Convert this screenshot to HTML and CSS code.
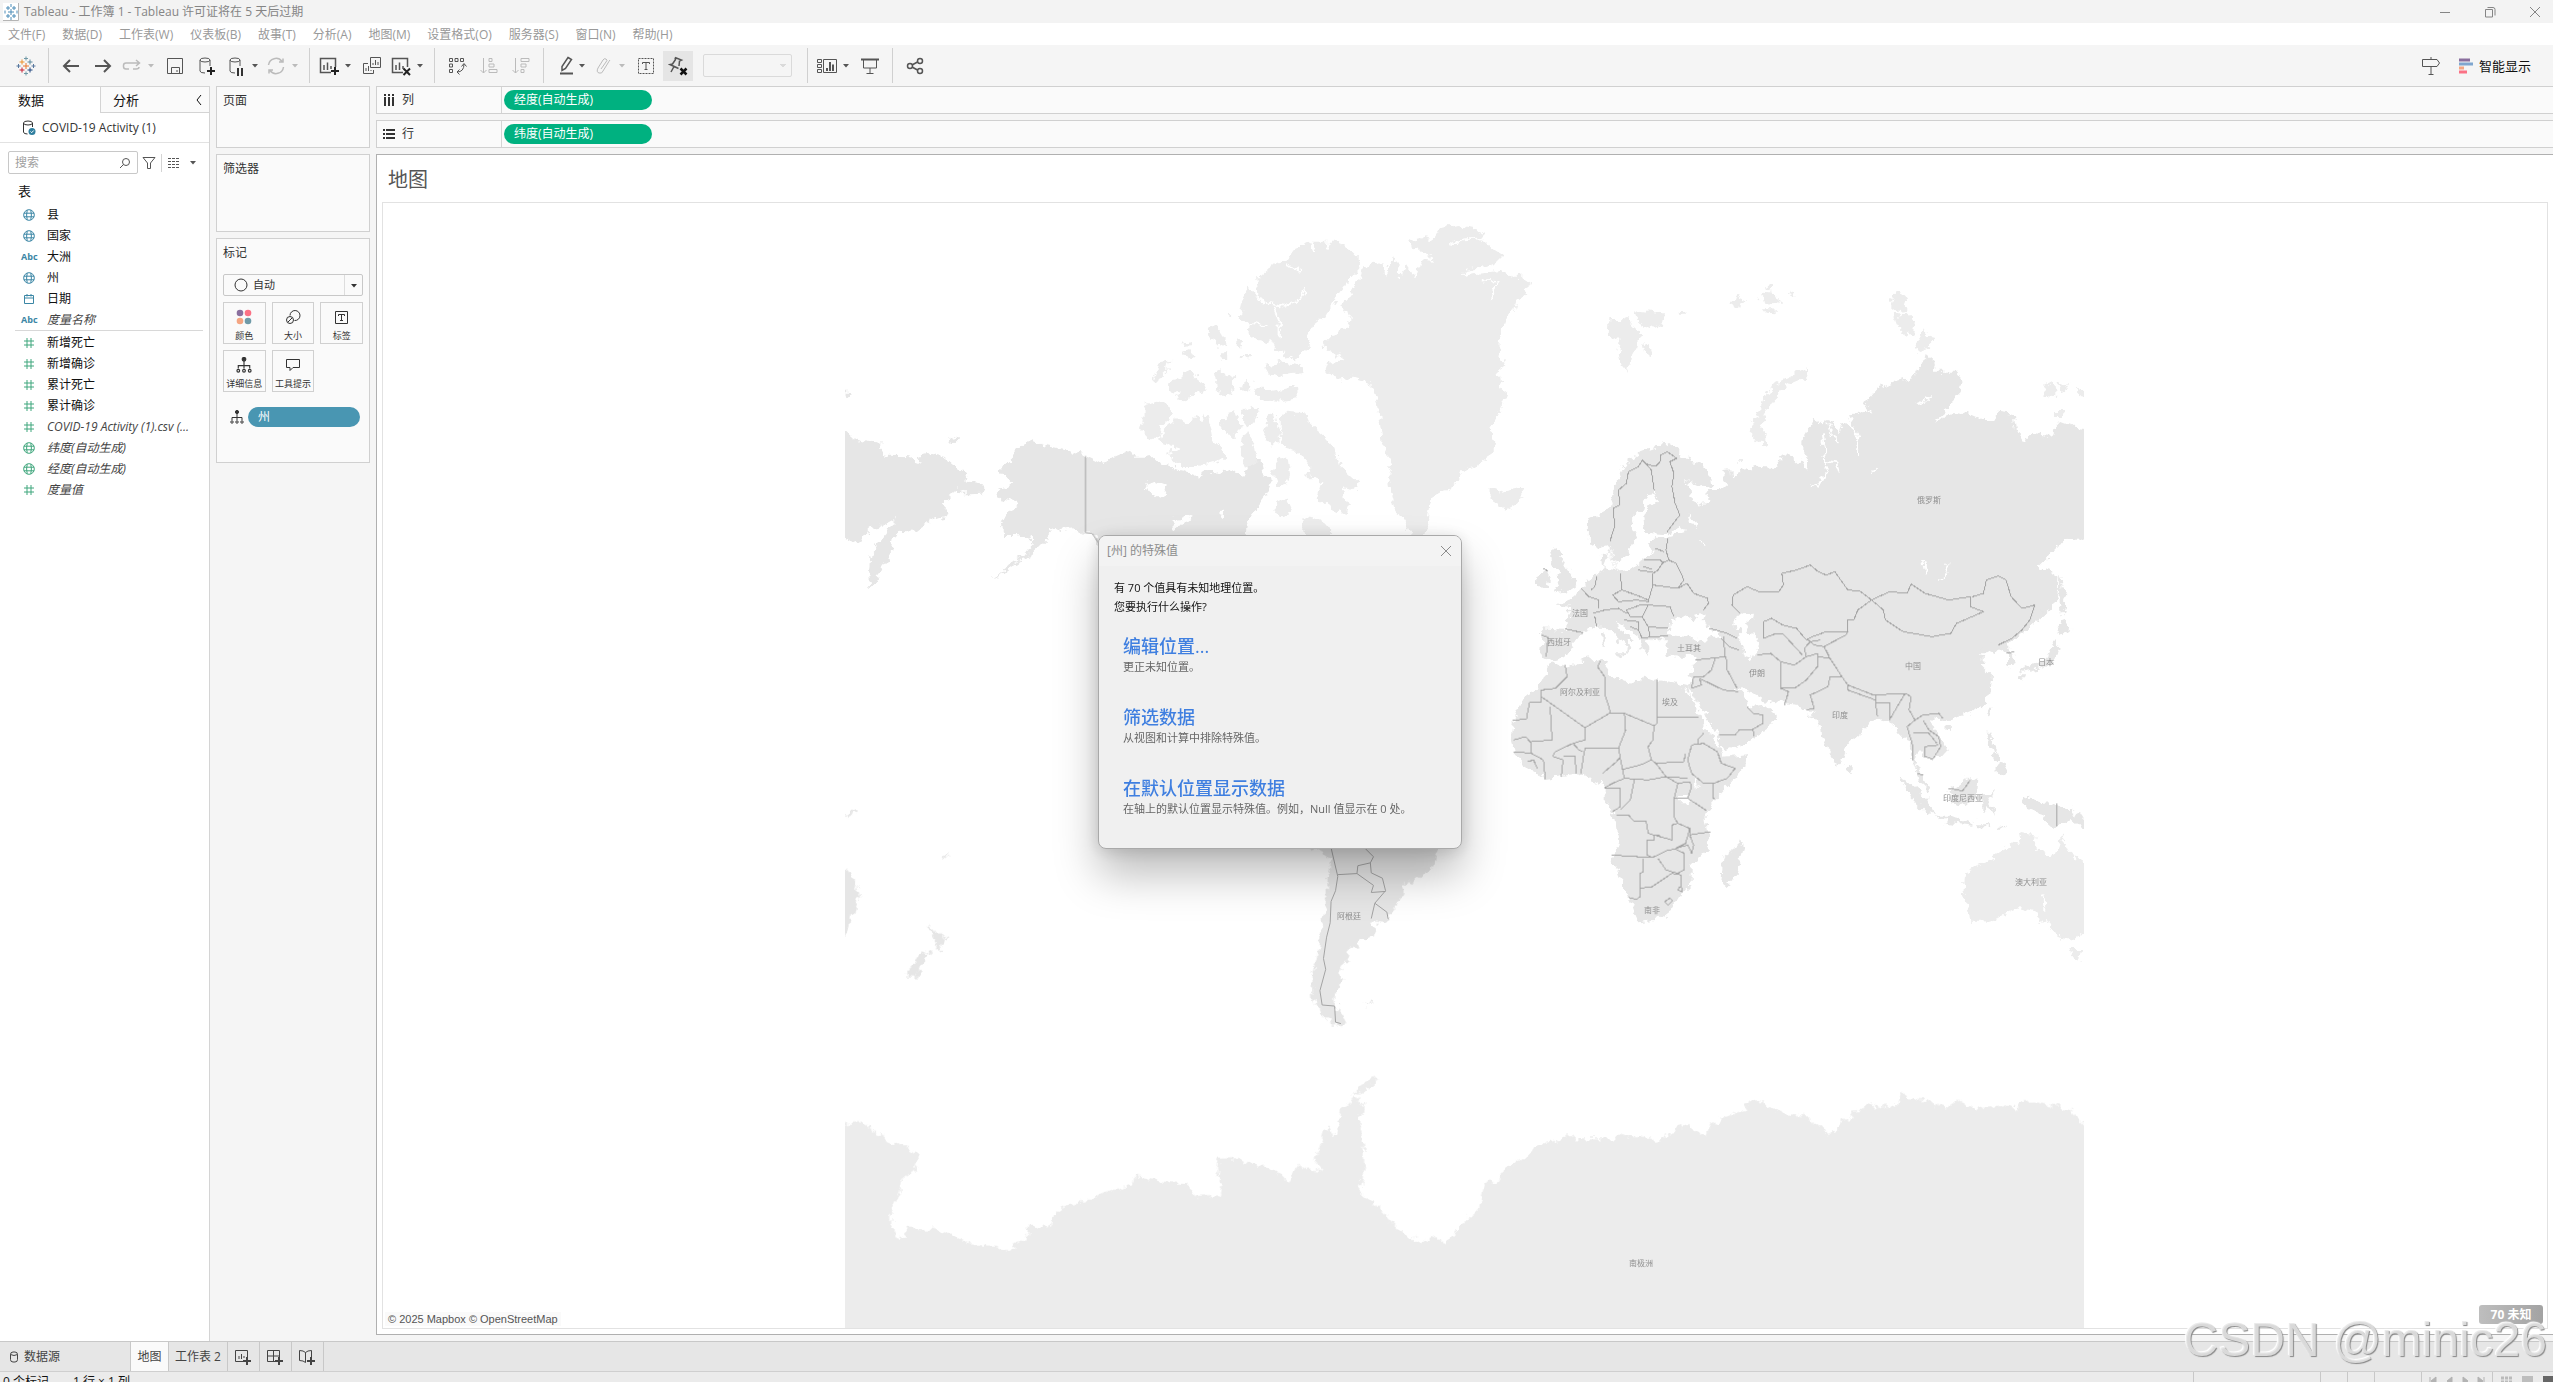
FILE: index.html
```html
<!DOCTYPE html>
<html lang="zh-CN">
<head>
<meta charset="utf-8">
<title>Tableau - 工作簿 1</title>
<link rel="stylesheet" href="styles.css">
</head>
<body>
<svg class="defs" aria-hidden="true">
  <symbol id="i-globe" viewBox="0 0 12 12"><path d="M6 .7a5.3 5.3 0 1 0 0 10.6A5.3 5.3 0 1 0 6 .7M4.2 1.2Q3 6 4.2 10.8M7.8 1.2Q9 6 7.8 10.8M.9 4.2h10.2M.9 7.8h10.2"/></symbol>
  <symbol id="i-hash" viewBox="0 0 12 12"><path d="M4 1v10M8 1v10M1 4h10M1 8h10"/></symbol>
  <symbol id="i-cal" viewBox="0 0 12 12"><path d="M1.500 2.500h9v8h-9zM1.500 5h9M4 1v2.500M8 1v2.500"/></symbol>
  <symbol id="i-tree" viewBox="0 0 14 14"><path d="M7 3v5M2 10V7.500h10V10M7 8v2"/><circle cx="7" cy="2" r="1.600" fill="currentColor"/><circle cx="2" cy="12" r="1.200"/><circle cx="7" cy="12" r="1.200"/><circle cx="12" cy="12" r="1.200"/></symbol>
  <symbol id="i-caret" viewBox="0 0 8 5"><path d="M1 1h6L4 4.500z" fill="currentColor" stroke="none"/></symbol>
  <symbol id="i-close" viewBox="0 0 12 12"><path d="M1 1l10 10M11 1L1 11"/></symbol>
  <symbol id="i-logo" viewBox="0 0 20 20"><path d="M10 7v6M7 10h6" stroke="#e8762d"/><path d="M6 3.500v5M3.500 6h5" stroke="#eb912c"/><path d="M14 3.500v5M11.500 6h5" stroke="#5b879b"/><path d="M6 11.500v5M3.500 14h5" stroke="#c72035"/><path d="M14 11.500v5M11.500 14h5" stroke="#1f447e"/><path d="M10 .5v4M8 2.500h4M10 15.500v4M8 17.500h4" stroke="#7099a6"/><path d="M2.500 8v4M.5 10h4M17.500 8v4M15.500 10h4" stroke="#59789f"/></symbol>
</svg>

<header class="titlebar">
  <svg class="app-icon" viewBox="0 0 16 18"><path d="M0 0h16v18H0z" fill="#fff" stroke="none"/><path d="M15.500 0v17.500H0" stroke="#b5b5b5"/><path d="M8 6v6M5 9h6M5 3v4M3 5h4M11 3v4M9 5h4M5 11v4M3 13h4M11 11v4M9 13h4M8 1v3M8 14v3M2 7.500v3M14 7.500v3" stroke="#4c8db8"/></svg>
  <span class="app-title">Tableau - 工作簿 1 - Tableau 许可证将在 5 天后过期</span>
  <div class="win-controls">
    <button aria-label="最小化"><svg viewBox="0 0 12 12"><path d="M1 6.500h10"/></svg></button>
    <button aria-label="还原"><svg viewBox="0 0 12 12"><path d="M1.500 3.500h7v7.500h-7zM3.500 1.500h5.500q2 0 2 2v6"/></svg></button>
    <button aria-label="关闭"><svg><use href="#i-close"/></svg></button>
  </div>
</header>

<nav class="menubar">
  <button>文件(F)</button><button>数据(D)</button><button>工作表(W)</button><button>仪表板(B)</button><button>故事(T)</button><button>分析(A)</button><button>地图(M)</button><button>设置格式(O)</button><button>服务器(S)</button><button>窗口(N)</button><button>帮助(H)</button>
</nav>

<div class="toolbar">
  <button class="tool" aria-label="起始页"><svg><use href="#i-logo"/></svg></button>
  <i class="sep"></i>
  <button class="tool" aria-label="撤销"><svg viewBox="0 0 20 20"><path d="M18 10H3M9 4l-6 6 6 6" stroke-width="2"/></svg></button>
  <button class="tool" aria-label="重做"><svg viewBox="0 0 20 20"><path d="M2 10h15M11 4l6 6-6 6" stroke-width="2"/></svg></button>
  <div class="split off"><button class="tool" aria-label="重播"><svg viewBox="0 0 20 20"><path d="M7 13H4q-2.500 0-2.500-2.500V9.500Q1.500 7 4 7h13M14 4l3.500 3L14 10M17 11q0 2-3 2h-3" stroke-width="1.500"/></svg></button><button class="caret" aria-label="更多"><svg><use href="#i-caret"/></svg></button></div>
  <button class="tool" aria-label="保存"><svg viewBox="0 0 20 20"><path d="M2.500 2.500h15v15h-15zM6.500 17v-5.500h8V17M12 14v2"/></svg></button>
  <button class="tool" aria-label="新建数据源"><svg viewBox="0 0 20 20"><ellipse cx="8" cy="4" rx="5" ry="2"/><path d="M3 4v11q0 2 5 2M13 4v6"/><path d="M14 11v8M10 15h8" stroke="#222" stroke-width="2"/></svg></button>
  <div class="split"><button class="tool" aria-label="暂停自动更新"><svg viewBox="0 0 20 20"><ellipse cx="9" cy="4" rx="5" ry="2"/><path d="M4 4v11q0 2 5 2M14 4v6"/><path d="M12 12v8M16 12v8" stroke="#333" stroke-width="2"/></svg></button><button class="caret" aria-label="更多"><svg><use href="#i-caret"/></svg></button></div>
  <div class="split off"><button class="tool" aria-label="刷新"><svg viewBox="0 0 20 20"><path d="M2.500 9A7.500 7.500 0 0 1 16 5.500M17 2.500V6h-4M17.500 11A7.500 7.500 0 0 1 4 14.500M3 17.500V14h4" stroke-width="1.500"/></svg></button><button class="caret" aria-label="更多"><svg><use href="#i-caret"/></svg></button></div>
  <i class="sep"></i>
  <div class="split"><button class="tool" aria-label="新建工作表"><svg viewBox="0 0 20 20"><path d="M12 16.500H1.500v-14h15V11M5 9v5M8.500 6.500V14M12 10v3" stroke-width="1.500"/><path d="M16 11v8M12 15h8" stroke="#222" stroke-width="2"/></svg></button><button class="caret" aria-label="更多"><svg><use href="#i-caret"/></svg></button></div>
  <button class="tool" aria-label="复制"><svg viewBox="0 0 20 20"><path d="M8.500 1.500h10v10h-10zM11 9V7M13.500 9V4M16 9V6M6 7.500H1.500v10h10V14M4 15v-3M6.500 15v-5M9 15v-1"/></svg></button>
  <div class="split"><button class="tool" aria-label="清除工作表"><svg viewBox="0 0 20 20"><path d="M12 16.500H1.500v-14h15V11M5 9v5M8.500 6.500V14M12 10v3" stroke-width="1.500"/><path d="M12.500 12.500l6.500 6.500M19 12.500L12.500 19" stroke="#222" stroke-width="2"/></svg></button><button class="caret" aria-label="更多"><svg><use href="#i-caret"/></svg></button></div>
  <i class="sep"></i>
  <button class="tool" aria-label="交换行和列"><svg viewBox="0 0 20 20"><path d="M2.500 2.500h3v3h-3zM8 2.500h3v3H8zM13.500 2.500h3v3h-3zM2.500 8h3v3h-3zM2.500 13.500h3v3h-3zM10 16q7 0 7-8M14.500 10.500L17 7.500l2.500 3M12.500 13.500L10 16l2.500 2.500"/></svg></button>
  <button class="tool off" aria-label="升序排序"><svg viewBox="0 0 20 20"><path d="M4.500 2v15M1.500 14l3 3 3-3M10 2.500h3v3h-3zM10 8h5v3h-5zM10 13.500h8v3h-8z"/></svg></button>
  <button class="tool off" aria-label="降序排序"><svg viewBox="0 0 20 20"><path d="M4.500 2v15M1.500 14l3 3 3-3M10 2.500h8v3h-8zM10 8h5v3h-5zM10 13.500h3v3h-3z"/></svg></button>
  <i class="sep"></i>
  <div class="split"><button class="tool" aria-label="突出显示"><svg viewBox="0 0 20 20"><path d="M15 1.500l3.500 2-6 9-3.500 2v-4z" stroke-width="1.500"/><path d="M7 17.500h13" stroke-width="2"/></svg></button><button class="caret" aria-label="更多"><svg><use href="#i-caret"/></svg></button></div>
  <div class="split off"><button class="tool" aria-label="组成员"><svg viewBox="0 0 20 20"><path d="M8 13l5-7q2-2 0-3t-3 1l-5 8q-2 4 1 5t4-2l5-8q1-2 2-3"/></svg></button><button class="caret" aria-label="更多"><svg><use href="#i-caret"/></svg></button></div>
  <button class="tool" aria-label="显示标记标签"><svg viewBox="0 0 20 20"><path d="M2.500 2.500h15v15h-15z" stroke-dasharray="2 1"/><path d="M6.500 8V6.500h7V8M10 6.500v7M8.500 13.500h3"/></svg></button>
  <button class="tool pressed" aria-label="固定轴"><svg viewBox="0 0 20 20"><path d="M7 1.500l6.500 2.500-2 1-.5 5M7 1.500l.5 2-3 4.500-2.500.5 8.500 4M6 10.500L3 16" stroke-width="1.500"/><path d="M12.500 12.500l6 6M18.500 12.500l-6 6" stroke="#111" stroke-width="2.500"/></svg></button>
  <select class="fit" aria-label="适合" disabled><option></option></select>
  <i class="sep"></i>
  <div class="split"><button class="tool" aria-label="显示/隐藏卡"><svg viewBox="0 0 20 20"><path d="M.5 3.500h4v3h-4zM.5 8.500h4v3h-4zM.5 13.500h4v3h-4zM6.500 3.500h13v13h-13z"/><path d="M10 15v-3M13 15V6M16 15V8.500" stroke-width="2"/></svg></button><button class="caret" aria-label="更多"><svg><use href="#i-caret"/></svg></button></div>
  <button class="tool" aria-label="演示模式"><svg viewBox="0 0 20 20"><path d="M1 3.500h18" stroke-width="2"/><path d="M3.500 4v8h13V4M10 12v5M6.500 17.500h7"/></svg></button>
  <i class="sep"></i>
  <button class="tool" aria-label="共享"><svg viewBox="0 0 20 20" stroke-width="1.500"><circle cx="5" cy="10" r="2.500"/><circle cx="15" cy="5" r="2.500"/><circle cx="15" cy="15" r="2.500"/><path d="M7 9l5.500-3M7 11l5.500 3"/></svg></button>
  <div class="toolbar-end">
    <button class="tool" aria-label="数据指南"><svg viewBox="0 0 20 20"><path d="M10 1v2M1.500 3.500H16l2.500 3.500-2.500 3.500H1.500zM10 10.500v8M7.500 18.500h5"/></svg></button>
    <button class="showme"><svg viewBox="0 0 14 16"><path d="M0 2h11" stroke="#8a6f9e"/><path d="M0 6h14" stroke="#7fa6cf"/><path d="M0 10h5" stroke="#f4a582"/><path d="M0 14h8" stroke="#fb7185"/></svg>智能显示</button>
  </div>
</div>

<div class="workspace">
  <aside class="datapane">
    <div class="pane-tabs">
      <button class="pane-tab active">数据</button>
      <div class="pane-tab-rest"><button class="pane-tab">分析</button><button class="collapse" aria-label="折叠"><svg viewBox="0 0 8 12"><path d="M6 1L2 6l4 5"/></svg></button></div>
    </div>
    <div class="datasource"><svg viewBox="0 0 14 16"><ellipse cx="6" cy="3" rx="4.500" ry="2"/><path d="M1.500 3v9q0 2 4 2M10.500 3v4"/><circle cx="10" cy="11.500" r="3.500" fill="#2f7f9f" stroke="none"/><path d="M8.500 11.500l1.200 1.200 2-2.200" stroke="#fff"/></svg>COVID-19 Activity (1)</div>
    <div class="searchrow">
      <label class="search"><input type="text" placeholder="搜索" aria-label="搜索"><svg viewBox="0 0 12 12"><circle cx="7" cy="5" r="3.500"/><path d="M4.500 7.500L1 11"/></svg></label>
      <button class="mini" aria-label="筛选"><svg viewBox="0 0 14 14"><path d="M1 1.500h12L8.500 7v5.500h-3V7z"/></svg></button>
      <i class="minisep"></i>
      <button class="mini listmode" aria-label="视图"><svg viewBox="0 0 14 14"><path d="M1 2.500h12M1 5.500h12M1 8.500h12M1 11.500h12" stroke-dasharray="3 1"/></svg></button>
      <button class="mini drop" aria-label="更多"><svg><use href="#i-caret"/></svg></button>
    </div>
    <h2 class="tables">表</h2>
    <ul class="fields dim">
      <li><svg><use href="#i-globe"/></svg>县</li>
      <li><svg><use href="#i-globe"/></svg>国家</li>
      <li><b>Abc</b>大洲</li>
      <li><svg><use href="#i-globe"/></svg>州</li>
      <li><svg><use href="#i-cal"/></svg>日期</li>
      <li><b>Abc</b><em>度量名称</em></li>
    </ul>
    <ul class="fields mea">
      <li><svg><use href="#i-hash"/></svg>新增死亡</li>
      <li><svg><use href="#i-hash"/></svg>新增确诊</li>
      <li><svg><use href="#i-hash"/></svg>累计死亡</li>
      <li><svg><use href="#i-hash"/></svg>累计确诊</li>
      <li><svg><use href="#i-hash"/></svg><em>COVID-19 Activity (1).csv (...</em></li>
      <li><svg><use href="#i-globe"/></svg><em>纬度(自动生成)</em></li>
      <li><svg><use href="#i-globe"/></svg><em>经度(自动生成)</em></li>
      <li><svg><use href="#i-hash"/></svg><em>度量值</em></li>
    </ul>
  </aside>

  <div class="cards">
    <section class="card pages"><h3>页面</h3></section>
    <section class="card filters"><h3>筛选器</h3></section>
    <section class="card marks">
      <h3>标记</h3>
      <div class="marktype"><svg class="ring" viewBox="0 0 14 14"><circle cx="7" cy="7" r="6"/></svg><select aria-label="标记类型"><option>自动</option></select><span class="arrow"><svg><use href="#i-caret"/></svg></span></div>
      <div class="markgrid">
        <button><svg viewBox="0 0 16 16"><g stroke="none"><circle cx="4" cy="4" r="3.300" fill="#8a6f9e"/><circle cx="12" cy="4" r="3.300" fill="#fb7185"/><circle cx="4" cy="12" r="3.300" fill="#f4a582"/><circle cx="12" cy="12" r="3.300" fill="#6f9aa8"/></g></svg>颜色</button>
        <button><svg viewBox="0 0 16 16"><path d="M5 6.500A5 5 0 1 1 9.500 11.500"/><circle cx="5" cy="11" r="3.500"/><path d="M3 13l4-4"/></svg>大小</button>
        <button><svg viewBox="0 0 16 16"><path d="M1.500 2.500h12v12h-12zM4.500 7V5.500h6V7M7.500 5.500v6M6 11.500h3"/></svg>标签</button>
        <button><svg><use href="#i-tree"/></svg>详细信息</button>
        <button><svg viewBox="0 0 16 16"><path d="M1.500 2.500h13v8H8l-3 3v-3H1.500z"/></svg>工具提示</button>
      </div>
      <div class="markpill"><svg><use href="#i-tree"/></svg><button class="pill blue">州</button></div>
    </section>
  </div>

  <main class="main">
    <div class="shelf"><div class="shelf-name"><svg viewBox="0 0 12 12"><path d="M2 0v2M6 0v2M10 0v2M2 3v9M6 3v9M10 3v9" stroke-width="2"/></svg>列</div><button class="pill green">经度(自动生成)</button></div>
    <div class="shelf"><div class="shelf-name"><svg viewBox="0 0 12 12"><path d="M0 2h2M0 6h2M0 10h2M3 2h9M3 6h9M3 10h9" stroke-width="2"/></svg>行</div><button class="pill green">纬度(自动生成)</button></div>
    <section class="view">
      <h1>地图</h1>
      <div class="canvas">
        <svg class="map" viewBox="383 203 2164 1125" role="img" aria-label="世界地图">
          <defs>
            <clipPath id="world"><path d="M845 203H2084V1328H845z"/></clipPath>
            <filter id="coast" filterUnits="userSpaceOnUse" x="820" y="200" width="1290" height="1140" color-interpolation-filters="sRGB"><feTurbulence type="fractalNoise" baseFrequency=".13" numOctaves="3" seed="4"/><feDisplacementMap in="SourceGraphic" scale="11" xChannelSelector="R" yChannelSelector="G"/></filter>
          </defs>
          <g clip-path="url(#world)">
          <g filter="url(#coast)">
            <!-- North America, Greenland, Iceland, Chukotka -->
            <g class="land" transform="translate(840 210) scale(.44643 .33333)">
              <path d="M-30 655L11 665 30 688 60 698 88 700 98 715 95 735 110 740 155 742 165 752 178 758 182 735 205 732 235 742 260 770 285 795 290 812 312 815 325 835 318 848 290 850 275 850 262 838 252 850 245 870 225 875 245 905 240 920 210 928 185 950 170 965 130 962 118 985 115 1010 110 1040 90 1075 75 1125 68 1135 65 1080 68 1035 85 1000 110 960 125 925 90 950 65 955 50 990 30 995 11 983-30 983z"/>
              <path d="M245 690L258 682 268 688 262 698 248 699zM8 545h12l4 10-8 10-8-3z"/>
              <path d="M358 770L385 755 385 735 405 710 432 692 455 705 490 715 525 725 550 735 570 748 590 762 610 745 650 722 658 740 685 740 700 735 715 755 750 765 755 785 790 795 805 810 815 785 840 790 860 782 895 790 905 800 915 770 925 745 945 755 950 785 965 810 960 845 940 880 915 925 908 976 1000 1000 580 1000 565 970 550 970 520 955 495 960 470 950 475 970 455 1000 430 1030 400 1055 350 1102 340 1103 385 1060 410 1040 430 1005 430 985 415 978 395 975 360 975 370 955 360 935 370 910 395 895 400 880 380 870 350 862 348 845 370 830 390 820 370 800 360 785z"/>
              <path class="ice" d="M725 660L750 630 775 640 800 615 812 640 820 610 830 650 835 690 860 720 860 745 835 755 800 768 765 768 740 745 735 725 765 715 705 690 725 680zM680 585L710 575 740 590 748 615 720 645 715 680 695 690 672 660 680 630zM850 640L870 605 885 600 895 640 888 680 870 680zM905 600L935 590 940 615 925 640 910 655 900 620zM900 680L915 670 930 720 935 760 905 770 895 740zM955 640L960 610 975 605 980 650 985 700 960 700 948 675zM985 625L1000 605 1045 610 1050 640 1085 680 1110 720 1120 770 1160 820 1155 840 1130 835 1125 870 1140 880 1135 915 1090 885 1070 860 1080 820 1060 800 1055 770 1030 730 1000 720 985 680zM985 740L1005 745 1010 790 1000 820 980 830 970 790zM1040 925L1075 930 1100 950 1100 990 1045 990zM985 870l20 5 10 30-25 15-15-25zM1045 780h12v25h-12z"/>
              <path class="ice" d="M930 530L960 540 1020 530 1025 565 980 575 940 570zM950 470L990 455 1035 470 1030 490 985 495 955 490zM825 360L840 352 855 375 868 400 850 410zM770 395L790 388 792 405 770 408zM765 430L785 420 790 440 775 450zM700 510L715 460 740 455 735 480 715 512zM735 520L765 510 765 485 790 490 810 510 820 540 795 550 770 575 755 565 760 545 735 540zM840 490L855 480 860 500 885 495 885 540 865 560 845 540zM885 380L900 395 903 415 890 415zM905 510L922 520 915 550 900 535zM870 308h6v15h-6zM850 430h15v20h-15zM900 435h18v10h-18z"/>
              <path class="ice" d="M935 205L960 175 1000 150 1020 115 1055 95 1105 95 1140 115 1165 150 1160 180 1140 210 1120 250 1100 290 1080 325 1060 345 1045 380 1060 400 1035 430 1020 455 995 430 975 415 965 390 945 400 915 370 918 340 895 320 905 260 915 230 940 260z"/>
              <path class="ice" d="M1170 210L1165 185 1190 165 1215 160 1220 195 1240 145 1255 200 1270 165 1290 205 1300 150 1325 155 1320 130 1280 120 1275 90 1305 85 1325 90 1340 60 1385 45 1420 55 1440 70 1435 85 1460 115 1485 135 1470 155 1445 170 1400 180 1390 195 1445 185 1480 180 1510 200 1530 200 1548 220 1535 250 1515 275 1510 300 1490 330 1480 370 1475 440 1495 460 1475 480 1480 530 1495 545 1480 590 1470 630 1455 660 1470 710 1455 740 1430 765 1390 785 1380 820 1350 845 1325 865 1320 905 1305 990 1280 980 1265 940 1245 900 1235 850 1228 800 1235 760 1215 700 1210 640 1205 580 1195 540 1175 510 1150 500 1115 510 1095 480 1085 460 1130 450 1110 430 1080 405 1100 380 1135 350 1142 320 1125 285 1145 250 1150 230zM1455 835L1475 845 1525 830 1530 860 1515 880 1490 898 1470 885 1465 870 1455 860z"/>
              <path class="sea" d="M675 830L705 812 730 825 725 850 705 865 695 845zM745 930L765 928 795 912 780 930 765 950 745 960zM850 905l10 0 0 12-10 0z"/>
              <path class="fjord" d="M925 235L950 280 990 290 1030 270 1045 240M970 290L985 340 985 380M1000 165L1030 180M1055 95l5 30M1095 95l-5 30M915 340l40 10M1365 105L1400 88 1440 85M1460 270L1475 210 1440 215"/>
            </g>
            <!-- Northern Eurasia -->
            <g class="land" transform="translate(1490 260) scale(.39541 .33333)">
              <path d="M250 850L250 780 300 750 310 700 325 650 345 610 375 580 420 560 445 548 475 570 500 600 530 610 560 650 562 680 540 685 490 665 510 690 515 730 535 740 555 715 548 690 580 690 600 670 590 630 608 628 610 655 640 630 680 620 720 625 735 600 730 585 770 595 803 630 805 600 790 580 790 540 810 500 820 470 840 490 860 480 885 520 895 490 920 510 908 460 960 455 950 425 975 390 1020 365 1075 345 1090 310 1110 292 1130 310 1125 335 1175 335 1195 365 1190 400 1165 430 1150 460 1125 485 1180 455 1215 465 1245 480 1280 480 1285 458 1325 465 1330 510 1350 552 1365 525 1420 530 1425 505 1440 485 1475 500 1540 508 1540 838 1450 840 1420 880 1385 920 1420 935 1438 950 1435 1010 1410 1060 1370 1100 1340 1130 1290 1160 1260 1180 670 1180 560 1100 400 1140 375 1125 320 1078 290 1100 265 1100 235 1120 195 1110 200 1040 165 1030 215 1015 225 995 255 955 285 930 280 885 300 880 300 855 270 865z"/>
              <path d="M803 325L800 350 750 375 720 420 695 460 688 510 705 555 675 550 655 520 670 480 690 430 715 375 760 350 790 330zM1035 90L1055 120 1050 150 1015 155 1015 120zM1025 165L1050 155 1075 180 1070 225 1040 215 1030 190zM1100 205L1122 240 1100 265 1075 272 1085 235zM302 180L330 180 350 170 360 200 385 225 370 250 350 335 330 310 325 270 330 240 300 230zM365 150L400 155 440 160 435 190 405 205 375 185zM390 245L412 280 400 300zM480 150h14v8h-14zM605 130L630 110 650 125 625 145zM680 110l15-15 25 5 10 25-25 10zM700 75l15 5-5 15zM755 100l17-8 0 20zM730 120l12 5-10 12zM690 145l30 0 0 15-20-2zM1400 375L1425 360 1430 400 1415 415 1400 405zM1435 375L1465 370 1450 405zM1480 385L1540 405 1540 415 1495 405zM1430 450h20v18h-20zM628 600h12v12h-12z" class="ice"/>
              <path d="M150 870L165 855 185 880 180 895 195 925 218 965 210 990 165 1000 175 975 165 955 175 940 155 910zM120 950L140 930 150 955 140 978 118 975z"/>
              <path class="sea" d="M395 700L420 695 425 715 405 740 385 770 390 815 450 820 480 795 495 815 455 830 420 830 400 850 415 885 390 885 385 905 350 930 320 935 305 860 320 910 350 880 370 830 355 800 365 765 385 745zM305 870L318 930 285 925zM500 765l18 15 0 25-12-20zM530 840l12 10 0 15z"/>
              <path class="fjord" d="M842 520L850 600 848 640 830 680 812 672M850 605L875 610 885 645M858 490L865 530 885 545M920 500L930 540 928 585M1160 910L1150 950 1115 980M845 1075L860 1062 895 1058M1080 430L1120 410M1095 900L1102 950M965 645L980 625M500 670L545 690"/>
            </g>
            <!-- Southern Eurasia, Africa, Australia -->
            <g class="land" transform="translate(1490 560) scale(.39541 .33333)">
              <path d="M130 205L195 210 235 220 215 250 195 285 160 300 130 290 135 240z"/>
              <path d="M265 170L290 200 320 230 345 260 340 285 355 260 345 240 365 240 330 210 315 180 345 205 375 230 385 265 400 285 408 265 395 245 420 235 448 235 440 260 445 285 480 290 520 290 515 320 500 380 510 395 530 440 560 490 580 540 585 565 600 572 660 540 700 510 725 465 700 440 690 430 680 445 655 435 645 410 625 385 635 378 660 400 690 420 740 430 780 435 800 450 825 460 800 465 835 480 840 530 860 580 878 620 895 595 905 550 940 515 960 485 985 475 1010 480 1030 530 1050 530 1065 560 1068 600 1080 640 1105 692 1110 680 1095 640 1075 620 1080 590 1085 570 1110 600 1140 590 1155 570 1145 530 1115 500 1120 475 1145 480 1200 465 1240 445 1265 400 1270 350 1245 320 1250 290 1235 280 1265 245 1285 260 1310 280 1310 320 1330 315 1325 280 1310 255 1370 200 1405 150 1405 60 700 60 265 60z"/>
              <path d="M160 305L190 320 240 300 280 295 300 305 295 340 340 365 380 370 385 345 420 360 480 370 500 375 505 400 525 450 545 500 580 560 590 590 650 583 645 620 610 670 560 730 545 770 555 840 550 870 510 915 510 965 485 1000 460 1050 430 1078 375 1087 365 1060 350 1010 330 960 310 900 325 850 320 780 290 720 290 680 250 655 230 640 140 655 90 620 60 580 55 540 60 480 90 410 130 370 150 320zM633 835L642 870 620 960 600 978 585 965 590 890 620 865zM903 605L915 625 910 642 902 635z"/>
              <path d="M1440 190L1450 185 1470 205 1450 225 1432 215zM1440 40L1448 90 1460 110 1445 170 1438 120zM1430 240L1438 260 1425 310 1395 325 1345 335 1340 325 1385 310 1410 290zM1335 340L1355 340 1345 365zM1262 440L1268 440 1262 470 1255 455zM1152 495h16v15h-16zM1255 515L1268 515 1270 550 1285 580 1260 560zM1275 625L1300 605 1305 635 1290 640zM1270 575l15 5 10 20-15 0zM1160 690L1180 680 1215 650 1235 660 1230 710 1200 740 1165 720zM1035 650L1060 665 1110 720 1125 765 1100 755 1065 710zM1125 770L1160 770 1225 785 1225 797 1165 790zM1245 700L1280 700 1262 715 1275 760 1255 745 1245 760zM1235 793h30v6h-30zM1280 805l30-10-20 15zM1345 715L1370 710 1390 735 1430 730 1480 760 1540 790 1540 810 1495 800 1470 780 1430 800 1410 790 1400 760 1360 745zM282 220l8 0 0 40-8 0zM315 280l25 0-5 15z"/>
              <path class="ice" d="M1200 940L1240 915 1265 905 1280 880 1310 860 1320 845 1340 850 1335 820 1385 830 1380 860 1415 890 1435 880 1445 820 1460 860 1485 900 1540 940 1540 1115 1500 1120 1470 1140 1430 1130 1410 1080 1390 1090 1385 1060 1340 1045 1290 1070 1250 1085 1215 1085 1210 1040 1195 990zM1465 1170L1495 1170 1490 1200 1475 1200z"/>
              <path class="sea" d="M450 225L455 190 480 165 500 175 515 185 520 165 545 155 530 180 560 200 580 230 540 240 490 230zM618 180L640 160 668 158 665 180 645 190 655 220 680 235 675 270 665 297 645 290 640 265 625 235 635 215 615 195zM478 705h25v25h-22z"/>
              <path class="fjord" d="M1400 1010L1402 1050M518 660l5 20M490 380l15 30"/>
            </g>
            <!-- South America, New Zealand, western Antarctica -->
            <g class="land" transform="translate(840 780) scale(.44643 .35714)">
              <path d="M-30 230L11 250 40 295 45 330 30 370 15 435-30 435zM198 402L220 435 238 435 225 475 210 480 215 455 205 430zM190 475L205 485 180 525 170 550 150 550 148 540 175 500zM1050 180L1100 220 1095 270 1090 350 1075 420 1068 500 1058 550 1060 610 1080 660 1105 685 1135 680 1112 640 1105 610 1115 580 1130 560 1118 540 1138 500 1140 475 1158 470 1160 450 1190 440 1200 420 1190 395 1220 400 1240 360 1260 325 1270 290 1315 265 1330 230 1340 180zM1170 628l22-5 0 9zM11 95l25-12 2 5-24 15zM230 215l18-12-12 16zM130 245l16 18"/>
              <path class="ice" d="M-30 960L11 958 45 955 70 975 100 1000 120 1020 145 1018 178 1050 170 1090 140 1120 130 1165 115 1200 115 1245 130 1285 148 1278 148 1255 210 1260 265 1278 285 1298 350 1308 375 1320 390 1300 418 1280 422 1248 470 1252 480 1220 500 1190 560 1178 590 1155 655 1135 660 1105 690 1120 780 1130 800 1170 850 1165 855 1130 845 1110 850 1060 900 1058 905 1075 950 1080 1005 1120 1030 1075 1050 1090 1085 1095 1060 1060 1075 1030 1085 975 1105 985 1108 1005 1118 960 1125 920 1155 880 1172 910 1165 960 1172 1020 1175 1080 1165 1155 1200 1190 1235 1235 1260 1270 1300 1292 1320 1280 1362 1295 1375 1265 1430 1200 1445 1125 1470 1130 1490 1085 1545 1050 1568 1020 1600 1010 1600 1680-30 1680zM1150 875L1190 835 1208 835 1165 878z"/>
            </g>
            <!-- Eastern Antarctica -->
            <g class="land" transform="translate(1520 1060) scale(.3699 .33333)">
              <path class="ice" d="M-40 330L0 300 20 297 30 270 55 250 110 242 130 222 150 235 260 235 275 218 290 226 335 230 365 242 410 225 420 208 455 195 485 220 500 230 515 195 575 160 605 150 612 130 635 120 660 125 670 145 700 158 780 170 795 195 820 195 830 225 860 208 868 185 895 170 900 152 920 150 940 130 970 142 1020 137 1032 97 1045 115 1100 118 1150 145 1185 118 1230 148 1310 132 1335 150 1350 127 1395 125 1485 150 1525 190 1580 200 1580 840-40 840z"/>
            </g>
          </g>
          <g class="borders">
            <path transform="translate(840 210) scale(.44643 .33333)" d="M550 738V968L565 970 580 1000"/>
            <path transform="translate(1490 260) scale(.39541 .33333)" d="M303 845L315 800 312 745 328 735 325 690 345 670 350 635 375 620 385 600 400 615 420 618 430 605 432 585 448 575 472 595 455 605 465 640 460 680 468 730 480 765 448 815M385 600L408 630 415 690M450 835L445 870 452 900M418 865L440 875M390 900L430 900 437 908 452 900 470 910 485 945 490 960 475 985 412 975 412 940 425 930 437 908M388 920L410 928M375 930L412 937M330 940L333 990 310 1005 325 1025 370 1020 400 1025 412 975M333 990L370 1005 400 1020M475 985L498 970 515 1000 550 1015 552 1030 540 1050M400 1035L455 1040 465 1070M400 1035L385 1070 400 1100 450 1105M345 1050L380 1035 400 1035M345 1050L355 1070 385 1070M260 1060L290 1050 325 1045 345 1060M230 985L250 1010 275 1020M270 950L265 980 255 990M275 1020V1045M265 1070L270 1100M190 1107L235 1118M340 1080L375 1085 375 1110 355 1100M375 1110L385 1135 410 1130 450 1128M400 1100L405 1130M632 1060L612 1035 615 1005 650 980 680 995 730 995 742 975 738 940 775 930 810 915 830 935 850 945 872 935 905 990 935 993 965 1020 930 1050 920 1080 905 1080 905 1115 850 1115 815 1130 800 1140 775 1105 740 1095 712 1075 692 1085 692 1135M965 1020L1010 995 1055 1000 1065 972 1100 1000 1160 1020 1215 1010 1215 1040 1248 1055 1180 1090 1165 1120 1118 1130 1045 1115 1000 1080 995 1050 965 1020M1220 1010L1248 1000 1255 960 1285 948 1305 960 1318 1010 1345 1045 1378 1035 1365 1080 1345 1110 1320 1135 1285 1155M555 1105L600 1120 625 1135M585 1135L605 1160 630 1170M135 925L148 935"/>
            <path transform="translate(1490 560) scale(.39541 .33333)" d="M130 225L147 232 142 290M190 315L195 350 165 385 130 390 130 428 100 428 92 478 58 480M130 410L240 503 305 458 290 400 290 350 272 320 280 300M305 458L340 460 415 497 423 490 423 360M423 472L528 472M240 503L240 540 210 550M152 440L157 540 105 545M60 540L90 530 105 550 105 580M60 575L105 580 135 600M95 605L110 600 120 625M340 460L343 510 325 565M415 497L412 540 400 560 408 600 380 615 335 628 325 565 240 565 235 600 230 640M210 550L225 570 235 575M210 550L165 575 158 590M160 590L185 600 180 650M185 590L215 590 218 640M135 600L140 660M408 600L420 610 490 605 495 580M500 600L510 555 540 550 575 575M525 550L525 540 540 520M500 600L510 640 540 670M575 575L585 610 620 625 600 655 565 670 540 670M420 610L445 650 500 655M335 628L340 655 400 660 445 650M340 655L310 670 290 683M285 640L320 605 330 590M290 683L330 685 330 740 310 755M365 660L355 720 330 750M445 650L475 670 465 720 465 770 475 790M475 670L505 665 510 680 500 715 465 715M500 715L548 752M565 670L563 710 568 720M320 765L350 765 365 785 395 785 400 820 460 840 460 795 475 790 505 805 505 825 558 815M430 825L415 825 415 840 397 840 397 885 410 893M505 825L515 855 510 880 500 855 470 865 495 850 505 805M308 885L410 893 450 870 470 868 492 880 490 930 475 940 445 930 425 895M387 895L387 935 380 940 380 1010 370 1018 350 1012M380 985L410 980 460 940 483 945 485 995 475 990 480 980M442 1025L455 1014 462 1022 450 1036z"/>
            <path transform="translate(1490 560) scale(.39541 .33333)" d="M520 300L580 292 597 290 600 330 625 385M570 295L560 330 540 350 515 350 510 385 535 375 530 355 590 390 628 395M590 230L595 290M580 525L620 525 630 510 665 508 668 530M665 508L690 490 690 465 665 460 650 440M675 285L710 280 735 305 735 385 755 395 745 435M735 305L770 315 800 290 830 280 828 320 800 360 770 385 735 385M740 220L790 285M692 235L720 222 740 220M800 290L795 265 810 245 835 240M830 290L860 295 890 350 860 350 855 380 810 405 820 445 800 450M905 215L900 225 860 250 845 260 820 255 805 240M845 260L858 290M890 350L905 375 970 405 1050 400 1065 410M905 375L905 390 975 420M975 405L975 430 1010 430 1010 480M980 470L975 430M1050 400L1030 440 1010 480M1065 410L1060 450 1075 480 1055 500 1070 560 1068 600M1075 480L1095 465 1135 460 1145 475M1095 480L1110 510 1135 530 1140 560 1120 597 1100 590 1100 560 1135 555M1070 520L1110 520 1130 550M1080 640L1095 645M1160 685L1195 693 1215 660M1307 280L1325 275M1433 730V800"/>
            <path transform="translate(840 780) scale(.44643 .35714)" d="M1100 190L1115 270 1110 310 1100 340 1098 400 1090 440 1083 500 1088 530 1075 590 1080 630 1108 633 1110 678 1122 682M1115 265L1158 262 1160 240 1188 232 1190 260 1215 275 1222 310 1198 345 1190 388M1158 262L1195 295 1190 315 1222 312M1198 345L1225 370 1228 390M1175 190L1195 215 1188 232"/>
          </g>
          <g class="places">
            <text x="1929" y="503">俄罗斯</text><text x="1580" y="616">法国</text><text x="1559" y="645">西班牙</text><text x="1689" y="651">土耳其</text><text x="1757" y="676">伊朗</text><text x="1913" y="669">中国</text><text x="2046" y="665">日本</text><text x="1580" y="695">阿尔及利亚</text><text x="1670" y="705">埃及</text><text x="1840" y="718">印度</text><text x="1963" y="801">印度尼西亚</text><text x="2031" y="885">澳大利亚</text><text x="1652" y="913">南非</text><text x="1349" y="919">阿根廷</text><text x="1641" y="1266">南极洲</text>
          </g>
          </g>
        </svg>
        <span class="attribution">© 2025 Mapbox © OpenStreetMap</span>
        <button class="unknown">70 未知</button>
      </div>
    </section>
  </main>
</div>

<footer class="sheetbar">
  <button class="sheet source"><svg viewBox="0 0 10 12"><rect x="1.500" y="1" width="7" height="10" rx="2.500"/><path d="M1.500 3.500q3.500 2 7 0"/></svg>数据源</button>
  <button class="sheet active">地图</button>
  <button class="sheet">工作表 2</button>
  <button class="sheet add" aria-label="新建工作表"><svg viewBox="0 0 18 18"><path d="M9 13.500H1.500v-11h12V9M5 11V8M7.500 11V6M10 10V8"/><path d="M13 9v8M9 13h8" stroke-width="2"/></svg></button>
  <button class="sheet add" aria-label="新建仪表板"><svg viewBox="0 0 18 18"><path d="M9 13.500H1.500v-11h12V9M1.500 8h12M7.500 2.500v11"/><path d="M13 9v8M9 13h8" stroke-width="2"/></svg></button>
  <button class="sheet add" aria-label="新建故事"><svg viewBox="0 0 18 18"><path d="M13.500 9V2.500q-4 0-6 2-2-2-6-2v10q4 0 6 2v-10"/><path d="M13 9v8M9 13h8" stroke-width="2"/></svg></button>
</footer>
<div class="statusbar">
  <span>0 个标记</span><span>1 行 × 1 列</span>
  <div class="status-end">
    <i class="cell w127"></i><i class="cell w27"></i><i class="cell w27"></i><i class="cell w47"></i>
    <div class="cell pager"><svg viewBox="0 0 56 10"><path d="M1 2v8M7 2v8L2 6zM23 2v8l-5-4zM34 2v8l5-4zM49 2v8l5-4zM55 2v8" fill="#b3b3b3" stroke="#b3b3b3"/></svg></div>
    <div class="cell modes"><svg viewBox="0 0 52 10"><path d="M0 2h11M0 6h11M0 10h11" stroke="#bbb" stroke-width="3" stroke-dasharray="3 1"/><path d="M21 0h11v10H21z" fill="#bdbdbd" stroke="none"/><path d="M42 0h10v10H42z" fill="#666" stroke="none"/></svg></div>
  </div>
</div>

<section class="dialog" role="dialog" aria-labelledby="dlg-title">
  <header><h2 id="dlg-title">[州] 的特殊值</h2><button aria-label="关闭"><svg><use href="#i-close"/></svg></button></header>
  <div class="dialog-body">
    <p class="ask">有 70 个值具有未知地理位置。<br>您要执行什么操作?</p>
    <div class="choice"><a href="#">编辑位置...</a><p>更正未知位置。</p></div>
    <div class="choice"><a href="#">筛选数据</a><p>从视图和计算中排除特殊值。</p></div>
    <div class="choice"><a href="#">在默认位置显示数据</a><p>在轴上的默认位置显示特殊值。例如，Null 值显示在 0 处。</p></div>
  </div>
</section>
<div class="watermark">CSDN @minic26</div>
</body>
</html>
```
FILE: styles.css
```css
* { box-sizing: border-box; }
body {
  margin: 0;
  height: 100vh;
  display: flex;
  flex-direction: column;
  overflow: hidden;
  background: #f5f5f5;
  color: #333;
  font: 12px/16px "Open Sans", "Noto Sans CJK SC", sans-serif;
}
button, input, select { font: inherit; color: inherit; background: none; border: 0; padding: 0; margin: 0; border-radius: 0; white-space: nowrap; }
h1, h2, h3, p, ul { margin: 0; padding: 0; font-weight: 400; }
svg { display: block; fill: none; stroke: currentColor; }
.defs { position: absolute; width: 0; height: 0; }

/* title and menu */
.titlebar { flex: none; height: 23px; display: flex; align-items: center; background: #f3f3f3; color: #858585; }
.app-icon { width: 16px; height: 18px; margin: 0 5px 0 3px; }
.win-controls { margin-left: auto; display: flex; gap: 13px; padding-right: 2px; }
.win-controls button { width: 32px; height: 20px; display: grid; place-items: center; }
.win-controls svg { width: 12px; height: 12px; }
.menubar { flex: none; height: 22px; display: flex; gap: 17px; padding: 1px 8px 0; align-items: center; background: #fff; color: #999; }

/* toolbar */
.toolbar { flex: none; height: 41px; display: flex; align-items: center; gap: 2px; padding: 0 22px 0 11px; color: #555; }
.tool { width: 30px; height: 30px; display: grid; place-items: center; flex: none; }
.tool svg { width: 20px; height: 20px; }
.tool.pressed { background: #e5e5e5; }
.split { display: flex; align-items: center; }
.split .tool { width: 24px; }
.caret { width: 14px; height: 30px; display: grid; place-items: center; }
.caret svg { width: 8px; height: 5px; }
.off { color: #bbb; }
.sep { flex: none; width: 1px; height: 35px; margin: 0 5px; background: #d0d0d0; }
.fit {
  width: 89px; height: 23px; margin: 0 8px; border: 1px solid #d0d0d0; border-radius: 2px; appearance: none;
  background: linear-gradient(45deg, transparent 50%, #d0d0d0 50%) 76px 9px / 3px 4px no-repeat, linear-gradient(-45deg, transparent 50%, #d0d0d0 50%) 79px 9px / 3px 4px no-repeat, #f5f5f5;
}
.toolbar-end { margin-left: auto; display: flex; align-items: center; gap: 13px; }
.showme { display: flex; align-items: center; gap: 6px; font-size: 13px; color: #111; }
.showme svg { width: 14px; height: 16px; stroke-width: 3; }

/* workspace */
.workspace { flex: 1; min-height: 0; display: flex; }
.datapane { flex: none; width: 210px; background: #fff; border-right: 1px solid #d4d4d4; border-top: 1px solid #d4d4d4; }
.pane-tabs { display: flex; height: 26px; font-size: 13px; color: #111; }
.pane-tab.active { width: 100px; padding-left: 18px; text-align: left; }
.pane-tab-rest { flex: 1; display: flex; justify-content: space-between; padding: 0 6px 0 12px; background: #fafafa; border-left: 1px solid #d4d4d4; border-bottom: 1px solid #d4d4d4; }
.collapse svg { width: 8px; height: 12px; }
.datasource { height: 30px; display: flex; align-items: center; gap: 6px; padding-left: 22px; border-bottom: 1px solid #e2e2e2; }
.datasource svg { width: 14px; height: 16px; }
.searchrow { display: flex; align-items: center; height: 23px; margin: 8px 0 0 8px; color: #555; }
.search { width: 130px; height: 23px; display: flex; align-items: center; padding: 0 6px; border: 1px solid #c8c8c8; border-radius: 2px; }
.search input { flex: 1; min-width: 0; outline: 0; }
.search input::placeholder { color: #a0a0a0; }
.search svg { width: 12px; height: 12px; }
.mini { width: 14px; margin-left: 4px; }
.mini svg { width: 14px; height: 14px; }
.mini.listmode { margin-left: 5px; }
.mini.drop svg { width: 8px; height: 5px; }
.mini.drop { margin-left: 8px; }
.minisep { width: 1px; height: 18px; margin-left: 5px; background: #d4d4d4; }
.tables { height: 30px; padding: 9px 0 0 18px; font-size: 13px; line-height: 16px; color: #111; }
.fields { list-style: none; margin: 0 6px 0 15px; }
.fields li { height: 21px; display: flex; align-items: center; color: #111; }
.fields svg { width: 12px; height: 12px; margin: 0 12px 0 8px; stroke-width: 1; flex: none; }
.fields b { width: 16px; margin: 0 10px 0 6px; font: bold 9px/12px "Open Sans", sans-serif; color: #3b86a5; }
.fields em { color: #444; white-space: nowrap; }
.dim { border-bottom: 1px solid #d8d8d8; }
.dim svg { color: #3b86a5; }
.mea { padding-top: 1px; }
.mea svg { color: #3fa67c; }

/* cards */
.cards { flex: none; width: 154px; margin-left: 6px; display: flex; flex-direction: column; gap: 6px; }
.card { background: #fafafa; border: 1px solid #d0d0d0; padding: 6px; }
.card h3 { font-size: 12px; line-height: 16px; color: #333; }
.pages { height: 62px; }
.filters { height: 78px; }
.marks { height: 225px; }
.marktype { display: flex; align-items: center; height: 22px; margin-top: 13px; border: 1px solid #c8c8c8; border-radius: 2px; font-size: 11px; }
.ring { width: 14px; height: 14px; margin: 0 5px 0 10px; flex: none; }
.marktype select { flex: 1; appearance: none; outline: 0; }
.arrow { width: 18px; height: 20px; display: grid; place-items: center; border-left: 1px solid #ddd; }
.arrow svg { width: 8px; height: 5px; }
.markgrid { display: grid; grid-template-columns: repeat(3, 1fr); gap: 6px; margin-top: 6px; }
.markgrid button { height: 42px; border: 1px solid #d0d0d0; display: flex; flex-direction: column; align-items: center; justify-content: flex-end; gap: 4px; font-size: 9px; line-height: 14px; }
.markgrid svg { width: 16px; height: 16px; }
.markpill { display: flex; align-items: center; gap: 4px; margin: 15px 3px 0 7px; }
.markpill svg { width: 14px; height: 14px; }
.pill { height: 20px; border-radius: 10px; color: #fff; text-align: left; padding-left: 10px; }
.pill.blue { flex: 1; background: #4996b2; }
.pill.green { width: 148px; margin-left: 2px; background: #00b180; }

/* shelves and view */
.main { flex: 1; min-width: 0; margin-left: 6px; display: flex; flex-direction: column; gap: 6px; }
.shelf { flex: none; height: 28px; display: flex; align-items: center; background: #fafafa; border: 1px solid #d0d0d0; border-right: 0; }
.shelf-name { width: 125px; height: 26px; display: flex; align-items: center; gap: 7px; padding-left: 6px; border-right: 1px solid #d4d4d4; }
.shelf-name svg { width: 12px; height: 12px; }
.view { flex: 1; min-height: 0; margin-bottom: 6px; padding: 0 5px 5px; display: flex; flex-direction: column; background: #fff; border: 1px solid #b0b0b0; border-right: 0; }
.view h1 { flex: none; height: 47px; padding: 11px 0 0 6px; font-size: 20px; line-height: 28px; color: #555; }
.canvas { flex: 1; min-height: 0; position: relative; border: 1px solid #e2e2e2; }
.map { width: 100%; height: 100%; stroke: none; }
.land { fill: #e6e6e6; }
.ice { fill: #ececec; }
.sea { fill: #fff; }
.fjord { fill: none; stroke: #fff; stroke-width: 5; }
.borders path { stroke: #a3a3a3; stroke-width: 1; vector-effect: non-scaling-stroke; shape-rendering: crispEdges; }
.places { fill: #8f8f8f; font-size: 8px; text-anchor: middle; }
.attribution { position: absolute; left: 2px; bottom: 2px; padding: 0 3px; background: #fafafa; color: #555; font: 11px/14px "Liberation Sans", sans-serif; }
.unknown { position: absolute; right: 4px; bottom: 4px; width: 64px; height: 19px; border-radius: 3px; background: linear-gradient(90deg, #bebebe, #a3a3a3); color: #fff; font-weight: 700; }

/* sheet tabs and status */
.sheetbar { flex: none; height: 31px; display: flex; background: #e6e6e6; border-top: 1px solid #c8c8c8; border-bottom: 1px solid #cfcfcf; color: #444; }
.sheet { display: flex; align-items: center; justify-content: center; padding: 0 6px; border-right: 1px solid #c8c8c8; }
.sheet.source { width: 131px; justify-content: flex-start; gap: 5px; padding-left: 9px; }
.sheet.source svg { width: 10px; height: 12px; }
.sheet.active { width: 38px; background: #fafafa; }
.sheet.add { width: 32px; }
.sheet.add svg { width: 18px; height: 18px; flex: none; }
.statusbar { flex: none; height: 10px; overflow: hidden; display: flex; gap: 24px; padding-left: 3px; background: #ebebeb; color: #111; line-height: 20px; }
.statusbar span { white-space: nowrap; }
.status-end { margin-left: auto; display: flex; }
.cell { border-left: 1px solid #c8c8c8; height: 10px; }
.w127 { width: 127px; }
.w27 { width: 27px; }
.w47 { width: 47px; }
.pager { width: 71px; padding: 3px 7px 0; }
.modes { width: 61px; padding: 4px 0 0 8px; }
.pager svg { width: 56px; height: 10px; }
.modes svg { width: 52px; height: 10px; }

/* special values dialog */
.dialog { position: fixed; left: 1098px; top: 535px; width: 364px; height: 314px; border: 1px solid #a9a9a9; border-radius: 8px; background: #f0f0f0; overflow: hidden; box-shadow: 0 26px 44px rgba(0, 0, 0, .26), 0 2px 16px rgba(0, 0, 0, .14); }
.dialog header { height: 30px; display: flex; align-items: center; justify-content: space-between; padding: 0 9px 0 8px; background: #f3f3f3; color: #8c8c8c; }
.dialog h2 { font-size: 12px; }
.dialog header svg { width: 12px; height: 12px; }
.dialog-body { padding: 12px 15px; font-size: 11px; line-height: 19px; color: #111; }
.choice { height: 71px; padding-left: 9px; color: #666; line-height: 16px; }
.choice a { display: block; font-size: 18px; line-height: 26px; font-weight: 500; color: #3f7fe0; text-decoration: none; }
.ask { margin-bottom: 17px; }
.watermark { position: fixed; right: 6px; bottom: 15px; font: 48px/54px "Liberation Sans", sans-serif; color: rgba(232, 232, 232, .85); text-shadow: 1px 1px 1px #888, -1px -1px 1px #fff; pointer-events: none; }
```
